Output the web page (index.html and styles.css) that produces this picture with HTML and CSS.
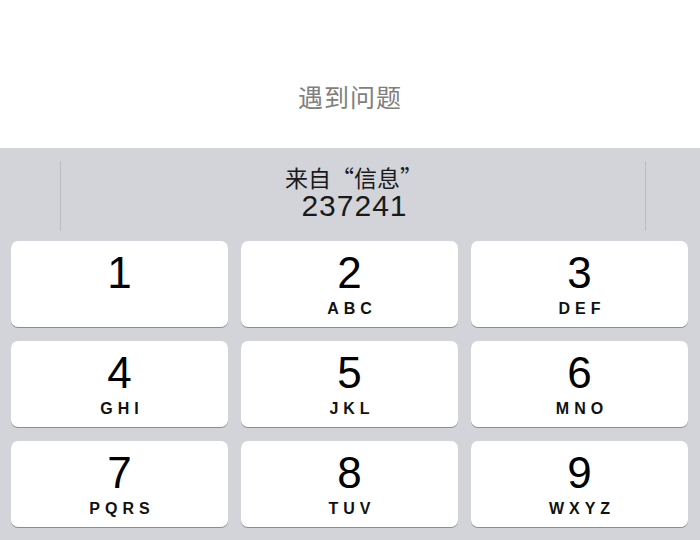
FILE: index.html
```html
<!DOCTYPE html>
<html lang="zh">
<head>
<meta charset="utf-8">
<link rel="stylesheet" href="styles.css">
</head>
<body>
<div class="header"><span class="title">遇到问题</span></div>
<div class="keyboard">
  <div class="bar">
    <div class="cell side"></div>
    <div class="divider"></div>
    <div class="cell main">
      <div class="from">来自“信息”</div>
      <div class="code">237241</div>
    </div>
    <div class="divider"></div>
    <div class="cell side"></div>
  </div>
  <div class="keys">
    <div class="key"><span class="num">1</span><span class="letters"></span></div>
    <div class="key"><span class="num">2</span><span class="letters">ABC</span></div>
    <div class="key"><span class="num">3</span><span class="letters">DEF</span></div>
    <div class="key"><span class="num">4</span><span class="letters">GHI</span></div>
    <div class="key"><span class="num">5</span><span class="letters">JKL</span></div>
    <div class="key"><span class="num">6</span><span class="letters">MNO</span></div>
    <div class="key"><span class="num">7</span><span class="letters">PQRS</span></div>
    <div class="key"><span class="num">8</span><span class="letters">TUV</span></div>
    <div class="key"><span class="num">9</span><span class="letters">WXYZ</span></div>
  </div>
</div>
</body>
</html>
```
FILE: styles.css
```css
html, body {
  margin: 0;
  padding: 0;
  width: 700px;
  height: 540px;
  overflow: hidden;
  background: #d2d4da;
  font-family: "Liberation Sans", "Noto Sans CJK SC", sans-serif;
}
.header {
  height: 148px;
  background: #ffffff;
  box-sizing: border-box;
  padding-top: 78px;
  text-align: center;
}
.title {
  font-family: "Noto Sans CJK SC", sans-serif;
  font-size: 25px;
  line-height: 36px;
  color: #7f7f7f;
  letter-spacing: 1px;
}
.keyboard {
  background: #d2d4da;
}
.bar {
  height: 93px;
  display: flex;
  align-items: flex-start;
}
.cell.side {
  width: 60px;
  flex: none;
}
.cell.side:last-child {
  width: 54px;
}
.divider {
  width: 1px;
  height: 70px;
  margin-top: 13px;
  background: #b9bbc1;
  flex: none;
}
.cell.main {
  flex: 1;
  text-align: center;
  padding-top: 15px;
  color: #1a1a1a;
}
.from {
  font-family: "Noto Sans CJK SC", sans-serif;
  font-size: 23px;
  line-height: 28px;
  padding-left: 2px;
}
.code {
  font-family: "Liberation Sans", sans-serif;
  font-size: 30px;
  line-height: 30px;
  letter-spacing: 1px;
  padding-left: 3px;
}
.keys {
  display: grid;
  grid-template-columns: 217px 217px 217px;
  grid-auto-rows: 87px;
  column-gap: 13px;
  row-gap: 13px;
  padding-left: 11px;
}
.key {
  background: #ffffff;
  border-radius: 7px;
  box-shadow: 0 1px 0 #8b8d91;
  height: 86px;
  display: flex;
  flex-direction: column;
  align-items: center;
  color: #000000;
}
.num {
  font-size: 44px;
  line-height: 44px;
  margin-top: 10px;
  font-weight: normal;
}
.letters {
  font-size: 16px;
  font-weight: bold;
  letter-spacing: 5px;
  padding-left: 5px;
  line-height: 18px;
  margin-top: 5px;
  color: #111;
}
```
